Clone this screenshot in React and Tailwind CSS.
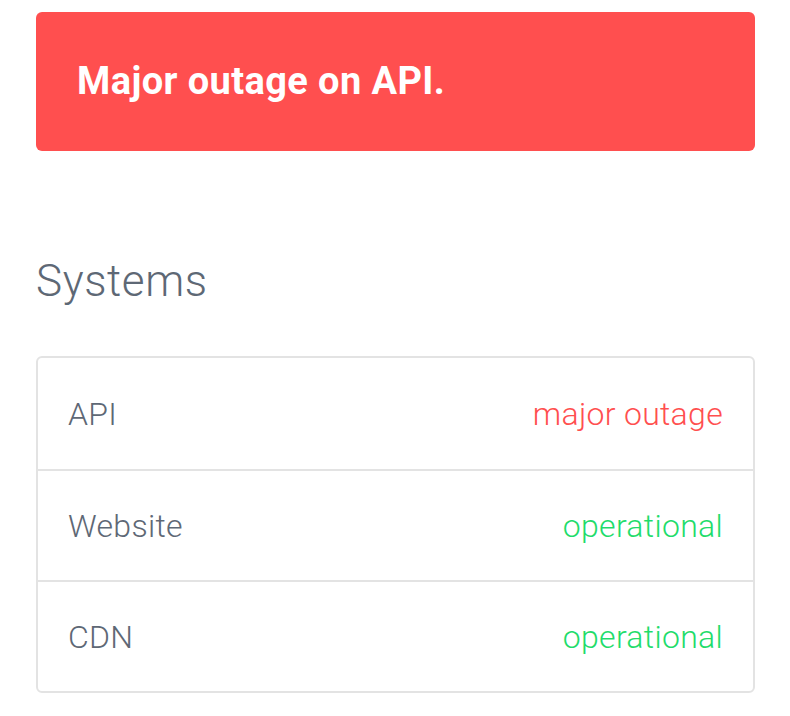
import React from 'react';

const systems = [
  { name: 'API', status: 'major outage', ok: false },
  { name: 'Website', status: 'operational', ok: true },
  { name: 'CDN', status: 'operational', ok: true },
];

export default function App() {
  return (
    <div className="min-h-screen bg-white pl-9 pr-[35px] pt-3" style={{ fontFamily: 'Roboto, "Noto Sans", sans-serif' }}>
      {/* Status banner */}
      <div className="flex h-[139px] items-center rounded-md bg-[#ff4f4f] px-[41px]">
        <h1 className="text-[38px] font-bold tracking-[0.4px] text-white">Major outage on API.</h1>
      </div>

      {/* Systems */}
      <h2 className="mt-[104px] text-[44px] font-light leading-[52px] tracking-[0.6px] text-[#5e6875]">Systems</h2>

      <div className="mt-[49px] rounded-md border-2 border-[#e3e3e3]">
        {systems.map((s, i) => (
          <div
            key={s.name}
            className={`flex h-[111px] items-center justify-between px-[30px] text-[32px] font-light tracking-[0.3px] ${
              i > 0 ? 'border-t-2 border-[#e3e3e3]' : ''
            }`}
          >
            <span className="text-[#5e6875]">{s.name}</span>
            <span className={s.ok ? 'text-[#1fdc6b]' : 'text-[#ff4f4f]'}>{s.status}</span>
          </div>
        ))}
      </div>
    </div>
  );
}
